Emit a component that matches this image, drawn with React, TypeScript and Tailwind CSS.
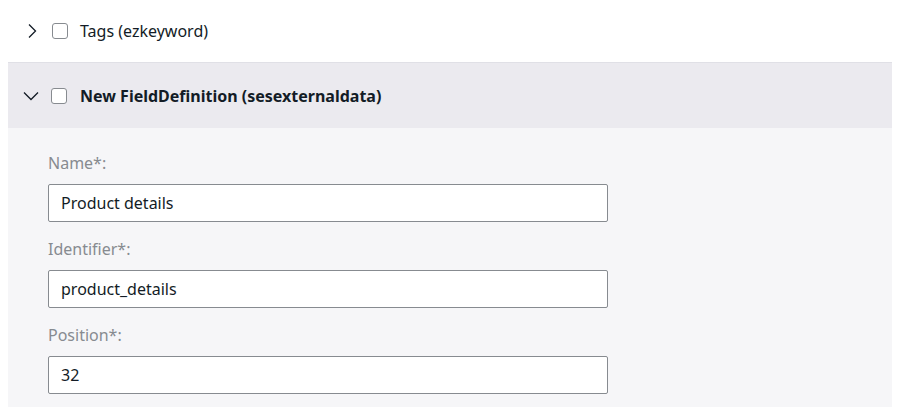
import React from "react";

function Checkbox() {
  return <div className="w-4 h-4 rounded-[3px] border border-[#878b90] bg-white shrink-0" />;
}

function Field({ label, value }: { label: string; value: string }) {
  return (
    <div className="flex flex-col">
      <div className="text-[16px] leading-[22px] text-[#878b90] mb-[10px]">{label}</div>
      <div className="w-[560px] h-[38px] border border-[#878b90] rounded-[2px] bg-white flex items-center px-[12px] text-[16px] text-[#131c26]">
        {value}
      </div>
    </div>
  );
}

export default function App() {
  return (
    <div className="w-[900px] h-[407px] bg-white overflow-hidden" style={{ fontFamily: '"Noto Sans", sans-serif' }}>
      <div className="h-[62px] flex items-center pl-[26px] gap-[14px]">
        <svg width="12" height="16" viewBox="0 0 12 16" className="text-[#131c26]">
          <path d="M3 1.5 L9.5 8 L3 14.5" fill="none" stroke="currentColor" strokeWidth="1.3" />
        </svg>
        <Checkbox />
        <span className="text-[16px] text-[#131c26] ml-[-2px]">Tags (ezkeyword)</span>
      </div>
      <div className="mx-2">
        <div className="h-[66px] bg-[#ebeaef] border-t border-[#e0e0e6] flex items-center pl-[15px] gap-[12px]">
          <svg width="16" height="10" viewBox="0 0 16 10" className="text-[#131c26]">
            <path d="M1 1.5 L8 8.5 L15 1.5" fill="none" stroke="currentColor" strokeWidth="1.3" />
          </svg>
          <Checkbox />
          <span className="text-[16px] font-bold text-[#131c26] ml-[1px]">New FieldDefinition (sesexternaldata)</span>
        </div>
        <div className="bg-[#f6f6f8] pl-10 pt-[24px] pb-[20px] flex flex-col gap-[16px]">
          <Field label="Name*:" value="Product details" />
          <Field label="Identifier*:" value="product_details" />
          <Field label="Position*:" value="32" />
        </div>
      </div>
    </div>
  );
}
